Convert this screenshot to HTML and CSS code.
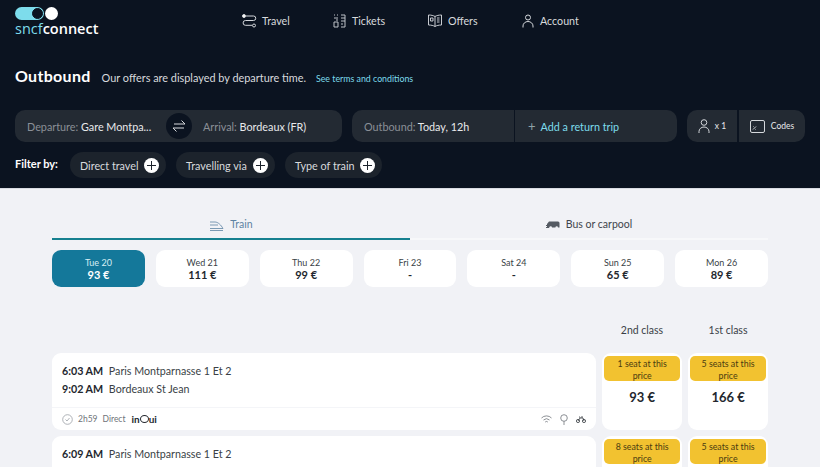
FILE: index.html
```html
<!DOCTYPE html>
<html lang="en">
<head>
    <meta charset="UTF-8">
    <meta name="viewport" content="width=device-width, initial-scale=1.0">
    <title>SNCF Connect - Outbound</title>
    <link rel="stylesheet" href="styles.css">
</head>
<body>
    <div class="header">
        <div class="topbar">
            <div class="logo">
                <div class="logo-mark">
                    <span class="logo-pill"><span class="logo-hole"></span></span>
                    <span class="logo-dot"></span>
                </div>
                <div class="logo-text"><span class="logo-sncf">sncf</span>connect</div>
            </div>
            <div class="nav">
                <div class="nav-item nav-travel">
                    <svg width="15" height="14" viewBox="0 0 15 14" fill="none" stroke="#d5d8dc" stroke-width="1"><circle cx="2" cy="2" r="1.5" fill="#fff"/><path d="M4 2h7.500a2.200 2.200 0 0 1 0 4.500H3.500a2.300 2.300 0 0 0 0 4.800H10"/><circle cx="12" cy="11.500" r="1.500"/></svg>
                    <span>Travel</span>
                </div>
                <div class="nav-item nav-tickets">
                    <svg width="13" height="14" viewBox="0 0 13 14" fill="none" stroke="#bfc3c8" stroke-width="1"><path d="M1 1h1M4 1h1M1 4h4M3 6h2M1 8h4v5H1zM8 1h4v12H8M8 4h4M8 7h4M8 10h2"/></svg>
                    <span>Tickets</span>
                </div>
                <div class="nav-item nav-offers">
                    <svg width="14" height="13" viewBox="0 0 14 13" fill="none" stroke="#c8cbd0" stroke-width="1"><path d="M7 2.500C5.500 1.500 3 1 .5 1v10c2.500 0 5 .5 6.500 1.500 1.500-1 4-1.500 6.500-1.500V1C11 1 8.500 1.500 7 2.500zM7 2.500v10M2.500 4h2.500v3H2.500zM9 4h2.500M9 6h2.500M9 8h2.500"/></svg>
                    <span>Offers</span>
                </div>
                <div class="nav-item nav-account">
                    <svg width="12" height="14" viewBox="0 0 12 14" fill="none" stroke="#d5d8dc" stroke-width="1"><circle cx="6" cy="3.500" r="2.500"/><path d="M1 13.500V12a5 4.500 0 0 1 10 0v1.500"/></svg>
                    <span>Account</span>
                </div>
            </div>
        </div>

        <div class="title-row">
            <h1>Outbound</h1>
            <p>Our offers are displayed by departure time.</p>
            <a class="terms">See terms and conditions</a>
        </div>

        <div class="search-row">
            <div class="field route">
                <div class="route-from"><span class="muted">Departure:</span> Gare Montpa...</div>
                <div class="swap">
                    <svg width="14" height="14" viewBox="0 0 14 14" fill="none" stroke="#d8dadd" stroke-width="1"><path d="M2 5h11M9.500 1.500 13 5M12 9H1M4.500 12.500 1 9"/></svg>
                </div>
                <div class="route-to"><span class="muted">Arrival:</span> Bordeaux (FR)</div>
            </div>
            <div class="dates">
                <div class="field date-out"><span class="muted">Outbound:</span> Today, 12h</div>
                <div class="field date-return"><span class="plus-thin">+</span>Add a return trip</div>
            </div>
            <div class="extras">
                <div class="field traveller">
                    <svg width="12" height="15" viewBox="0 0 12 15" fill="none" stroke="#d5d8dc" stroke-width="1"><circle cx="6" cy="3.500" r="2.800"/><path d="M1 14v-1.500a5 4.500 0 0 1 10 0V14"/></svg>
                    <span>x 1</span>
                </div>
                <div class="field codes">
                    <svg width="15" height="13" viewBox="0 0 15 13" fill="none" stroke="#d5d8dc" stroke-width="1"><path d="M2 .5h11a1.500 1.500 0 0 1 1.500 1.500v9a1.500 1.500 0 0 1-1.500 1.500H2A1.500 1.500 0 0 1 .5 11V2A1.500 1.500 0 0 1 2 .5zM3 9.500l3-3M3 6.500h.5M5.500 9.500H6"/></svg>
                    <span>Codes</span>
                </div>
            </div>
        </div>

        <div class="filter-row">
            <span class="filter-label">Filter by:</span>
            <div class="pill pill-direct">Direct travel <span class="plus-circle"></span></div>
            <div class="pill pill-via">Travelling via <span class="plus-circle"></span></div>
            <div class="pill pill-type">Type of train <span class="plus-circle"></span></div>
        </div>
    </div>

    <div class="content">
        <div class="tabs">
            <div class="tab tab-active">
                <svg width="15" height="10" viewBox="0 0 15 10" fill="none" stroke="#5d83a3" stroke-width=".8"><path d="M1 1h5c3 0 6 3 8 6.500H1M1 4h8M1 9.500h13"/></svg>
                <span>Train</span>
            </div>
            <div class="tab">
                <svg width="14" height="9" viewBox="0 0 14 9" fill="#555b63"><path d="M3 .5h9a1.500 1.500 0 0 1 1.500 1.500v4.500H12a1.300 1.300 0 0 0-2.600 0H6a1.300 1.300 0 0 0-2.600 0H1V3z"/><path d="M0 4h3v1H0zM0 6h3v1H0z"/></svg>
                <span>Bus or carpool</span>
            </div>
        </div>

        <div class="days">
            <div class="day day-active"><span>Tue 20</span><b>93 €</b></div>
            <div class="day"><span>Wed 21</span><b>111 €</b></div>
            <div class="day"><span>Thu 22</span><b>99 €</b></div>
            <div class="day"><span>Fri 23</span><b>-</b></div>
            <div class="day"><span>Sat 24</span><b>-</b></div>
            <div class="day"><span>Sun 25</span><b>65 €</b></div>
            <div class="day"><span>Mon 26</span><b>89 €</b></div>
        </div>

        <div class="class-heads">
            <span>2nd class</span>
            <span>1st class</span>
        </div>

        <div class="offer">
            <div class="offer-main">
                <div class="stops">
                    <div class="stop"><b>6:03 AM</b> Paris Montparnasse 1 Et 2</div>
                    <div class="stop"><b>9:02 AM</b> Bordeaux St Jean</div>
                </div>
                <div class="offer-foot">
                    <svg width="11" height="11" viewBox="0 0 11 11" fill="none" stroke="#9ba0a6" stroke-width=".8"><circle cx="5.500" cy="5.500" r="4.800"/><path d="M3.500 5.500l1.500 1.500 2.500-3"/></svg>
                    <span class="duration">2h59</span>
                    <span class="duration">Direct</span>
                    <span class="brand"><i>in</i><span class="brand-o"></span><i>ui</i></span>
                    <div class="amenities">
                        <svg width="11" height="9" viewBox="0 0 11 9" fill="none" stroke="#6f747a" stroke-width=".8"><path d="M.5 3a7 7 0 0 1 10 0M2.500 5a4.500 4.500 0 0 1 6 0M4.200 7a2 2 0 0 1 2.600 0"/></svg>
                        <svg width="8" height="11" viewBox="0 0 8 11" fill="none" stroke="#6f747a" stroke-width=".8"><circle cx="4" cy="4" r="3.300"/><path d="M4 7.300V11"/></svg>
                        <svg width="10" height="8" viewBox="0 0 10 8" fill="none" stroke="#33383e" stroke-width=".8"><circle cx="2" cy="6" r="1.600"/><circle cx="8" cy="6" r="1.600"/><path d="M2 6l2-3h3l1 3M4 3 3.500 1.500M6 1v2"/></svg>
                    </div>
                </div>
            </div>
            <div class="price">
                <div class="seats">1 seat at this price</div>
                <div class="amount">93 €</div>
            </div>
            <div class="price">
                <div class="seats">5 seats at this price</div>
                <div class="amount">166 €</div>
            </div>
        </div>

        <div class="offer offer-cut">
            <div class="offer-main">
                <div class="stops">
                    <div class="stop"><b>6:09 AM</b> Paris Montparnasse 1 Et 2</div>
                </div>
            </div>
            <div class="price">
                <div class="seats">8 seats at this price</div>
            </div>
            <div class="price">
                <div class="seats">5 seats at this price</div>
            </div>
        </div>
    </div>
</body>
</html>
```

FILE: styles.css
```css
* {
    margin: 0;
    padding: 0;
    box-sizing: border-box;
}

html, body {
    height: 467px;
    overflow: hidden;
}

body {
    font-family: Lato, "Open Sans", sans-serif;
    background: #f1f2f6;
    color: #23272e;
    font-size: 11px;
}

svg {
    flex-shrink: 0;
    display: block;
}

.header {
    height: 189px;
    background: #0b1320;
    color: #fff;
    padding: 0 15px;
    border-bottom: 1px solid #d9dce2;
}

.topbar {
    display: flex;
    height: 41px;
}

.logo {
    width: 227px;
    padding-top: 7px;
}

.logo-mark {
    display: flex;
    align-items: center;
}

.logo-pill {
    width: 29px;
    height: 13px;
    border-radius: 7px;
    background: #7ddcec;
    display: flex;
    justify-content: flex-end;
    align-items: center;
    padding-right: 1px;
}

.logo-hole {
    width: 11px;
    height: 11px;
    border-radius: 50%;
    background: #0b1320;
    border: 1px solid #0b1320;
}

.logo-dot {
    width: 13px;
    height: 13px;
    border-radius: 50%;
    background: #fff;
    margin-left: 1px;
}

.logo-text {
    font-family: "Open Sans", sans-serif;
    font-size: 14.500px;
    font-weight: 600;
    line-height: 15px;
    margin-top: 1px;
}

.logo-sncf {
    color: #7ddcec;
    font-weight: 400;
}

.nav {
    display: flex;
    align-items: center;
}

.nav-item {
    display: flex;
    align-items: center;
    gap: 6px;
    font-size: 10.700px;
    color: #d8dadd;
}

.nav-travel {
    width: 91px;
    gap: 5px;
}

.nav-tickets {
    width: 95px;
}

.nav-offers {
    width: 94px;
}

.title-row {
    display: flex;
    align-items: baseline;
    margin-top: 25px;
    height: 21px;
}

.title-row h1 {
    font-size: 16px;
    font-weight: 700;
    letter-spacing: .3px;
    margin-right: 11px;
}

.title-row p {
    font-size: 10.900px;
    color: #d8dadd;
    margin-right: 10px;
}

.terms {
    font-size: 8.800px;
    color: #7ddcec;
}

.search-row {
    display: flex;
    margin-top: 23px;
    gap: 10px;
}

.field {
    height: 32px;
    background: #232a33;
    display: flex;
    align-items: center;
    flex-shrink: 0;
    font-size: 10.800px;
    color: #e8e9eb;
    white-space: pre;
}

.muted {
    color: #8b9097;
}

.route {
    width: 327px;
    border-radius: 10px;
}

.route-from {
    width: 151px;
    padding-left: 12px;
}

.swap {
    width: 26px;
    height: 26px;
    border-radius: 50%;
    background: #0b1320;
    display: flex;
    align-items: center;
    justify-content: center;
}

.route-to {
    padding-left: 11px;
}

.dates {
    display: flex;
    gap: 1px;
}

.date-out {
    width: 162px;
    padding-left: 12px;
    border-radius: 10px 0 0 10px;
}

.date-return {
    width: 162px;
    padding-left: 13px;
    border-radius: 0 10px 10px 0;
    color: #7ddcec;
}

.plus-thin {
    color: #8fa3a8;
    font-size: 13px;
    margin-right: 5px;
}

.extras {
    display: flex;
    gap: 2px;
}

.traveller {
    width: 50px;
    border-radius: 10px 0 0 10px;
    justify-content: center;
    gap: 5px;
    font-size: 8.500px;
}

.codes {
    width: 66px;
    border-radius: 0 10px 10px 0;
    justify-content: center;
    gap: 6px;
    font-size: 8.500px;
}

.filter-row {
    display: flex;
    align-items: center;
    margin-top: 10px;
    gap: 10px;
}

.filter-label {
    font-size: 11px;
    font-weight: 700;
    width: 45px;
    padding-bottom: 3px;
    white-space: nowrap;
}

.pill {
    height: 26px;
    border-radius: 13px;
    background: #1c232c;
    display: flex;
    align-items: center;
    justify-content: space-between;
    padding: 0 7px 0 10px;
    font-size: 10.800px;
    color: #d8dadd;
}

.pill-direct {
    width: 96px;
}

.pill-via {
    width: 99px;
}

.pill-type {
    width: 97px;
}

.plus-circle {
    width: 15px;
    height: 15px;
    border-radius: 50%;
    background: linear-gradient(#1c232c, #1c232c) center / 9px 1px no-repeat,
                linear-gradient(#1c232c, #1c232c) center / 1px 9px no-repeat,
                #fff;
}

.content {
    padding: 0 52px;
}

.tabs {
    display: grid;
    grid-template-columns: 358px 358px;
    margin-top: 29px;
}

.tab {
    height: 22px;
    display: flex;
    align-items: flex-start;
    justify-content: center;
    gap: 6px;
    font-size: 10.500px;
    color: #3f454c;
    border-bottom: 2px solid #f7f8fa;
}

.tab svg {
    margin-top: 3px;
}

.tab-active {
    color: #5d83a3;
    border-bottom-color: #16808f;
}

.days {
    display: grid;
    grid-template-columns: repeat(7, 1fr);
    gap: 11px;
    margin-top: 10px;
}

.day {
    height: 37px;
    border-radius: 9px;
    background: #fff;
    display: flex;
    flex-direction: column;
    align-items: center;
    justify-content: center;
    font-size: 9px;
    line-height: 12px;
    color: #3a3f46;
}

.day b {
    font-size: 11px;
    color: #23272e;
}

.day-active {
    background: #14789a;
    color: #d9eef4;
}

.day-active b {
    color: #fff;
}

.class-heads {
    display: grid;
    grid-template-columns: 80px 80px;
    gap: 6px;
    justify-content: end;
    margin-top: 37px;
    height: 29px;
    font-size: 10.500px;
    text-align: center;
    color: #3a3f46;
}

.offer {
    display: flex;
    gap: 6px;
    height: 77px;
    margin-bottom: 6px;
}

.offer-cut {
    height: 31px;
    margin-bottom: 0;
}

.offer-main {
    width: 545px;
    border-radius: 9px;
    background: #fff;
    display: flex;
    flex-direction: column;
}

.offer-cut .offer-main,
.offer-cut .price {
    border-radius: 9px 9px 0 0;
}

.stops {
    height: 54px;
    padding: 9px 10px 0;
}

.stop {
    font-size: 10.700px;
    line-height: 18px;
    color: #3a3f46;
}

.stop b {
    font-weight: 700;
    color: #23272e;
    margin-right: 3px;
}

.offer-foot {
    height: 23px;
    border-top: 1px solid #f4f5f8;
    display: flex;
    align-items: center;
    padding: 0 10px;
    gap: 5px;
    font-size: 8.500px;
    color: #6f747a;
}

.brand {
    display: flex;
    align-items: center;
    color: #23272e;
    font-size: 10px;
    font-weight: 700;
    margin-left: 1px;
}

.brand i {
    font-style: normal;
}

.brand-o {
    width: 9px;
    height: 8px;
    border: 1.500px solid #23272e;
    border-radius: 50%;
}

.amenities {
    margin-left: auto;
    display: flex;
    align-items: center;
    gap: 8px;
}

.price {
    width: 80px;
    border-radius: 9px;
    background: #fff;
    padding: 3px 2px 0;
    text-align: center;
}

.seats {
    height: 25px;
    border-radius: 5px;
    background: #f2c230;
    font-size: 8.800px;
    line-height: 12px;
    padding: 2px 8px 0;
    color: #4a3c10;
    overflow: hidden;
}

.amount {
    margin-top: 8px;
    font-size: 13px;
    font-weight: 700;
    color: #23272e;
}
```
